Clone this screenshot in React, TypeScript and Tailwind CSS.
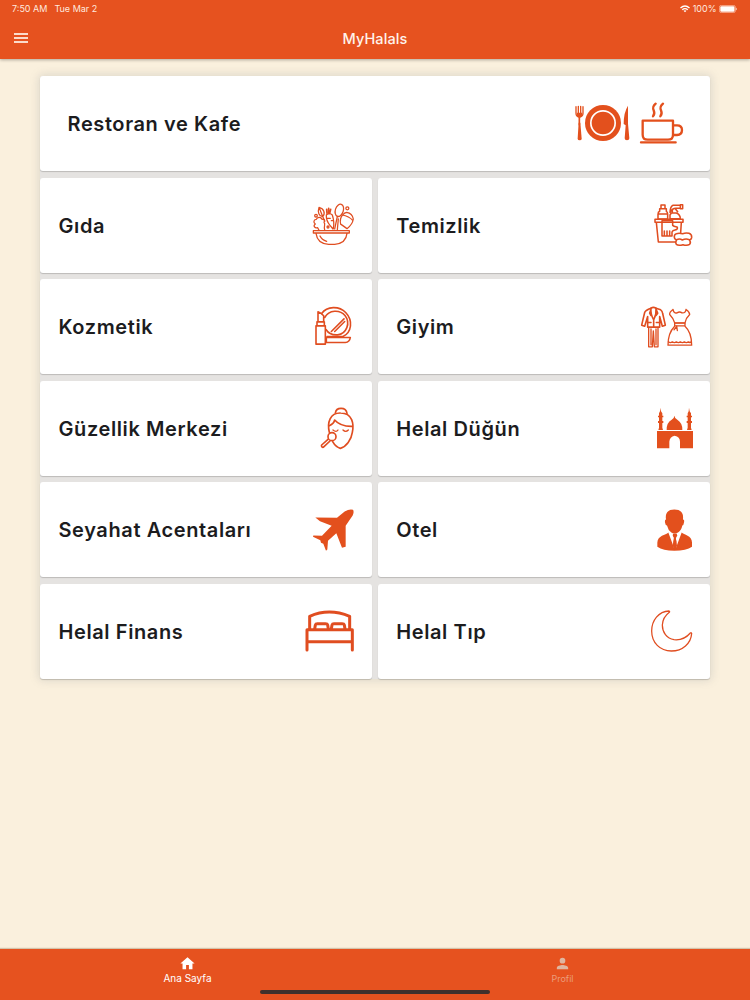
import type { ReactNode } from "react";

function Glyph({ box, className, width = 6, children }: { box: string; className: string; width?: number; children: ReactNode }) {
  return (
    <svg
      viewBox={box}
      className={`h-[60px] shrink-0 ${className}`}
      fill="none"
      stroke="#e04d20"
      strokeWidth={width}
      strokeLinecap="round"
      strokeLinejoin="round"
    >
      {children}
    </svg>
  );
}

const O = "#e3501d";

function DiningIcon() {
  return (
    <svg viewBox="0 3 450 195" className="h-[65px] w-[150px] shrink-0" fill="none" stroke={O} strokeLinecap="round" strokeLinejoin="round">
      <path d="M48 50v20q0 10 10 12q11-2 11-12V50M55 49v24M62 49v24" strokeWidth="4" />
      <path d="M50 68h17l-1 10-8 6-7-6z" fill={O} stroke="none" />
      <path d="M58 84v20" strokeWidth="5" />
      <path d="M56 98h5l4 48q0 5-6 5t-6-5z" fill={O} stroke="none" />
      <circle cx="129" cy="99" r="54" fill={O} stroke="none" />
      <circle cx="129" cy="99" r="36.500" stroke="#fff" strokeWidth="5" />
      <path d="M204 47v54l4 44q0 6-7 6t-7-6l3-39-6-4q0-35 13-55z" fill={O} stroke="none" />
      <g strokeWidth="7">
        <path d="M248 92h91v42q0 15-15 15h-61q-15 0-15-15z" />
        <path d="M341 106h10q15 0 15 14t-15 15h-11M243 157h104" />
        <path d="M287 41c-20 17 6 22-8 38M309 41c-20 17 6 22-8 38" />
      </g>
    </svg>
  );
}

function FoodIcon() {
  return (
    <Glyph box="0 0 216 180" className="w-[72px]" width={3.8}>
      <path d="M40 107h108v7H40zM48 115q4 31 38 33h18q34-3 37-33" />
      <path d="M60 123q5 11 20 16" />
      <path d="M74 104c-4-10 4-15-2-23 5-4 0-11-6-8-3-9-15-7-17 0-9 0-9 11-3 14-8 6-1 14 7 11l4 8" />
      <path d="M57 37c-5 15 0 27 11 28 9-10 4-24-11-28zM59 42l15 37" />
      <path d="M80 43l1 12M86 40v15M92 43l-3 12" strokeWidth="5" />
      <path d="M79 60q10-8 18 0 7 22 3 41M79 60q-1 17 11 31l9 11M82 70h9M94 77h6" />
      <ellipse cx="118" cy="46" rx="12" ry="19" transform="rotate(18 118 46)" />
      <path d="M112 64l-8 38M129 59c-7 5-10 18-7 29l19 13c8-6 17-17 19-29q-3-17-20-20-7 1-11 7zM126 60q22 4 32 16M122 87l17 12M115 72l-3 32" />
      <circle cx="48" cy="62" r="4" /><circle cx="142" cy="40" r="4.500" /><circle cx="84" cy="96" r="3" />
    </Glyph>
  );
}

function CleaningIcon() {
  return (
    <Glyph box="0 0 210 180" className="w-[70px]" width={4.6}>
      <path d="M63 30h12v11H63zM59 41h20v8q4 2 4 9v14H54V58q0-7 5-9zM56 57h25" />
      <path d="M99 31h22v9h-10q-13-2-21 12 1-18 9-21zM121 29h7v12h-7M97 43v8M106 41l7 9M94 54h15q12 5 12 17H90V60z" />
      <path d="M45 73h84v9H45zM49 82l6 59h50M124 82l-2 31" />
      <path d="M66 77h32v14c8 7 16 1 14 10-3 7-12 1-16 10v12H66zM73 108v14M81 108v15M89 108v14" />
      <path d="M109 116q7-2 19 0 10-4 19-1 9 3 8 13-2 7-7 6 6 8 1 14-8 5-20 1-14 4-20-1-4-7 1-13-8-3-7-10 0-8 6-9zM110 134q9-4 17 1 10-5 21-1" />
    </Glyph>
  );
}

function CosmeticsIcon() {
  return (
    <Glyph box="0 -1.5 216 180" className="w-[72px]" width={4.8}>
      <path d="M54 73V43q10 4 17 12v18M51 73h22v12H51zM48 85h28v55H48z" />
      <path d="M65 48C81 25 118 25 137 45c23 24 18 60-8 72H81" />
      <path d="M74 60c13-24 46-24 61-6 18 23 4 55-22 58-14 1-27-3-35-16" />
      <path d="M94 102l38-38M104 102l30-30" />
      <path d="M79 120h72q-2 14-15 15H79z" />
    </Glyph>
  );
}

function ClothingIcon() {
  return (
    <Glyph box="0 -1.5 240 180" className="w-[80px]" width={4.8}>
      <path d="M63 32q7-5 15 0l14 5q5 3 6 11l8 35-9 3-8-29v32H53V57l-9 29-9-3 9-38q2-7 19-13z" />
      <path d="M63 32q-2 18 8 35 9-17 7-35M63 35l-4 12 4 7M78 35l5 12-5 7M71 67v20M54 75h9M79 75h9" />
      <path d="M56 90v58h11l3-48 3 48h11V90M63 94v48M78 94v48" strokeWidth="4" />
      <g strokeWidth="4">
        <path d="M129 36q-11 8-10 15 11 11 15 25h31q3-15 14-25 0-8-11-15M129 36q3 13 12 10 8-5 15 0 11 1 12-10" />
        <path d="M134 77h31v8h-31zM134 86c-10 10-20 30-20 57h71c0-26-8-46-20-57" />
        <path d="M115 133q6 5 12 0 6 5 12 0 6 5 12 0 6 5 12 0 6 5 12 0 5 4 9 0M140 86l2 13M140 87l-8 10" />
      </g>
    </Glyph>
  );
}

function BeautyIcon() {
  return (
    <Glyph box="0 0 216 180" className="w-[72px]" width={5}>
      <path d="M106 45q2-14 17-14 16 0 18 15" />
      <path d="M88 103c-7-29 2-59 34-58 36 0 40 34 35 58-3 22-18 43-36 48q-14-4-23-20" />
      <path d="M88 83q14-6 16-17 17 20 53 19" />
      <path d="M99 96q10 8 15 0M129 96q8 8 16 0" strokeWidth="4" />
      <circle cx="96" cy="116" r="12" />
      <path d="M84 124l-19 17q-2 3 1 6 3 2 6-1l18-17" />
    </Glyph>
  );
}

function MosqueIcon() {
  return (
    <svg viewBox="0 0 210 180" className="h-[60px] w-[70px] shrink-0" fill={O}>
      <path d="M51 99h108v52h-39v-20q0-15-16-18-15 3-16 18v20H51z" />
      <path d="M80 96q-1-22 15-31 8-4 8-12 1 8 9 12 16 10 15 31z" />
      <path d="M61 29l2 11 4 6v7h3v5h-3v11h3v6h-3v14l2 7H55l2-7V75h-3v-6h3V58h-3v-5h3v-7l3-6zM147 29l2 11 4 6v7h3v5h-3v11h3v6h-3v14l2 7h-14l2-7V75h-3v-6h3V58h-3v-5h3v-7l3-6z" />
    </svg>
  );
}

function PlaneIcon() {
  return (
    <svg viewBox="0 -1.5 216 180" className="h-[60px] w-[72px] shrink-0" fill={O}>
      <path d="M46 51L111 52L134 33Q148 25 159 28Q163 34 158 45L137 76L137 139L126 142L109 98L84 121L82 147L78 151L70 130L63 127L61 119L39 109L40 105L66 106L95 76L60 62Z" />
    </svg>
  );
}

function HotelIcon() {
  return (
    <svg viewBox="0 -1.5 210 180" className="h-[60px] w-[70px] shrink-0" fill={O}>
      <path d="M78 57C75 37 84 27 103 27s29 10 26 30q5 0 3 9-1 8-5 9-3 15-13 21-10 6-20 0-10-7-13-21-5-1-6-9-1-9 3-9z" />
      <path d="M85 96l17 46-1-20 2-8-5-9 3-5h8l3 5-5 9 2 8-1 20 17-46c6 7 31 9 31 30v13q-17 12-53 12-34 0-51-12v-13c1-21 25-22 33-30z" />
      <path d="M98 100h13l-4 9h-6zM102 109h5l4 27-6 12-7-12z" />
    </svg>
  );
}

function BedIcon() {
  return (
    <Glyph box="0 -3 231 180" className="w-[77px]" width={9}>
      <path d="M44 80V43q58-26 120 0v37M36 144V83h136v61M39 119h131" />
      <path d="M59 81l2-12q1-4 6-4h24q6 0 7 4l2 12M109 81l2-12q1-4 6-4h24q6 0 7 4l2 12" />
    </Glyph>
  );
}

function MoonIcon() {
  return (
    <Glyph box="900 63 210 180" className="w-[70px]" width={3.8}>
      <path d="M987 93c-31 1-52 28-52 60 0 35 25 60 59 60 34 0 59-23 61-53q-1-3-4-1c-13 15-31 22-49 20-22-3-35-22-35-44 1-18 9-29 21-38q2-3-1-4z" />
    </Glyph>
  );
}

const categories: { label: string; icon: ReactNode }[] = [
  { label: "Gıda", icon: <FoodIcon /> },
  { label: "Temizlik", icon: <CleaningIcon /> },
  { label: "Kozmetik", icon: <CosmeticsIcon /> },
  { label: "Giyim", icon: <ClothingIcon /> },
  { label: "Güzellik Merkezi", icon: <BeautyIcon /> },
  { label: "Helal Düğün", icon: <MosqueIcon /> },
  { label: "Seyahat Acentaları", icon: <PlaneIcon /> },
  { label: "Otel", icon: <HotelIcon /> },
  { label: "Helal Finans", icon: <BedIcon /> },
  { label: "Helal Tıp", icon: <MoonIcon /> },
];

function Card({ label, icon, wide }: { label: string; icon: ReactNode; wide?: boolean }) {
  return (
    <div
      className={`flex h-[95px] items-center justify-between rounded-[3px] bg-white shadow-[0_1px_1px_rgba(0,0,0,0.18)] ${
        wide ? "col-span-2 pl-[27.5px]" : "pl-[18.5px]"
      }`}
    >
      <span className="whitespace-nowrap pt-px text-[20px] font-semibold tracking-[0.6px] text-[#1c1c1e]">{label}</span>
      {icon}
    </div>
  );
}

export default function App() {
  return (
    <div className="flex h-[1000px] w-[750px] flex-col overflow-hidden bg-[#faf0dd] font-['Inter','Liberation_Sans',sans-serif]">
      <header className="z-10 h-[58.500px] shrink-0 bg-[#e6521f] text-white shadow-[0_1px_3px_rgba(0,0,0,0.3)]">
        <div className="flex h-[18px] items-center justify-between pl-3 pr-[12px] text-[9px] text-[#ffe9df]">
          <div className="flex gap-[7px]">
            <span>7:50 AM</span>
            <span>Tue Mar 2</span>
          </div>
          <div className="flex items-center gap-[2.500px]">
            <svg viewBox="0 0 20 15" className="h-[8px] w-[10px]" fill="none" stroke="#fff" strokeWidth="2.8">
              <path d="M1 5.500Q10-2.500 19 5.500M4.500 9q5.500-4.500 11 0" />
              <path d="M7 11q3-2 6 0l-3 3z" fill="#fff" stroke="none" />
            </svg>
            <span>100%</span>
            <svg viewBox="0 0 19 8" className="h-[8px] w-[19px]" fill="#fff">
              <rect x=".4" y=".4" width="16" height="7.200" rx="2" fill="none" stroke="#ffc9b4" strokeWidth=".7" />
              <rect x="1.300" y="1.300" width="14.200" height="5.400" rx="1.200" />
              <path d="M17.300 2.500q1.500 1.500 0 3z" />
            </svg>
          </div>
        </div>
        <div className="grid h-[40px] grid-cols-3 items-center px-[14px]">
          <div className="flex w-[14px] flex-col gap-[2px]">
            <span className="h-[2px] bg-[#fbdccb]" />
            <span className="h-[2px] bg-[#fbdccb]" />
            <span className="h-[2px] bg-[#fbdccb]" />
          </div>
          <h1 className="pt-px text-center text-[14.500px] font-medium tracking-[0.1px] text-[#fff3ec]">MyHalals</h1>
        </div>
      </header>

      <main className="flex-1 px-10 pt-[17.500px]">
        <div className="grid grid-cols-2 gap-x-[5.500px] gap-y-[6.500px] rounded-[3px] bg-[#e5e3e1] shadow-[0_0_8px_2px_rgba(120,130,140,0.2)]">
          <Card wide label="Restoran ve Kafe" icon={<DiningIcon />} />
          {categories.map((c) => (
            <Card key={c.label} label={c.label} icon={c.icon} />
          ))}
        </div>
      </main>

      <footer className="flex h-[51px] shrink-0 flex-col bg-[#e6521f] shadow-[0_-1px_1px_rgba(100,60,20,0.25)]">
        <nav className="grid h-[41px] grid-cols-2 pt-[6px] text-[10px] leading-[12px]">
          <div className="flex flex-col items-center text-white">
            <svg viewBox="0 0 24 24" className="h-[17px] w-[17px]" fill="currentColor">
              <path d="M10 20v-6h4v6h5v-8h3L12 3 2 12h3v8z" />
            </svg>
            <span>Ana Sayfa</span>
          </div>
          <div className="flex flex-col items-center gap-[1px] text-[#dfb6a0]">
            <svg viewBox="0 0 24 24" className="h-[17px] w-[17px]" fill="currentColor">
              <path d="M12 12a4 4 0 1 0 0-8 4 4 0 0 0 0 8zm0 2c-2.700 0-8 1.300-8 4v2h16v-2c0-2.700-5.300-4-8-4z" />
            </svg>
            <span className="text-[9px] text-[#eb9d7c]">Profil</span>
          </div>
        </nav>
        <div className="mx-auto h-[4px] w-[230px] rounded-full bg-[#40302c]" />
      </footer>
    </div>
  );
}
